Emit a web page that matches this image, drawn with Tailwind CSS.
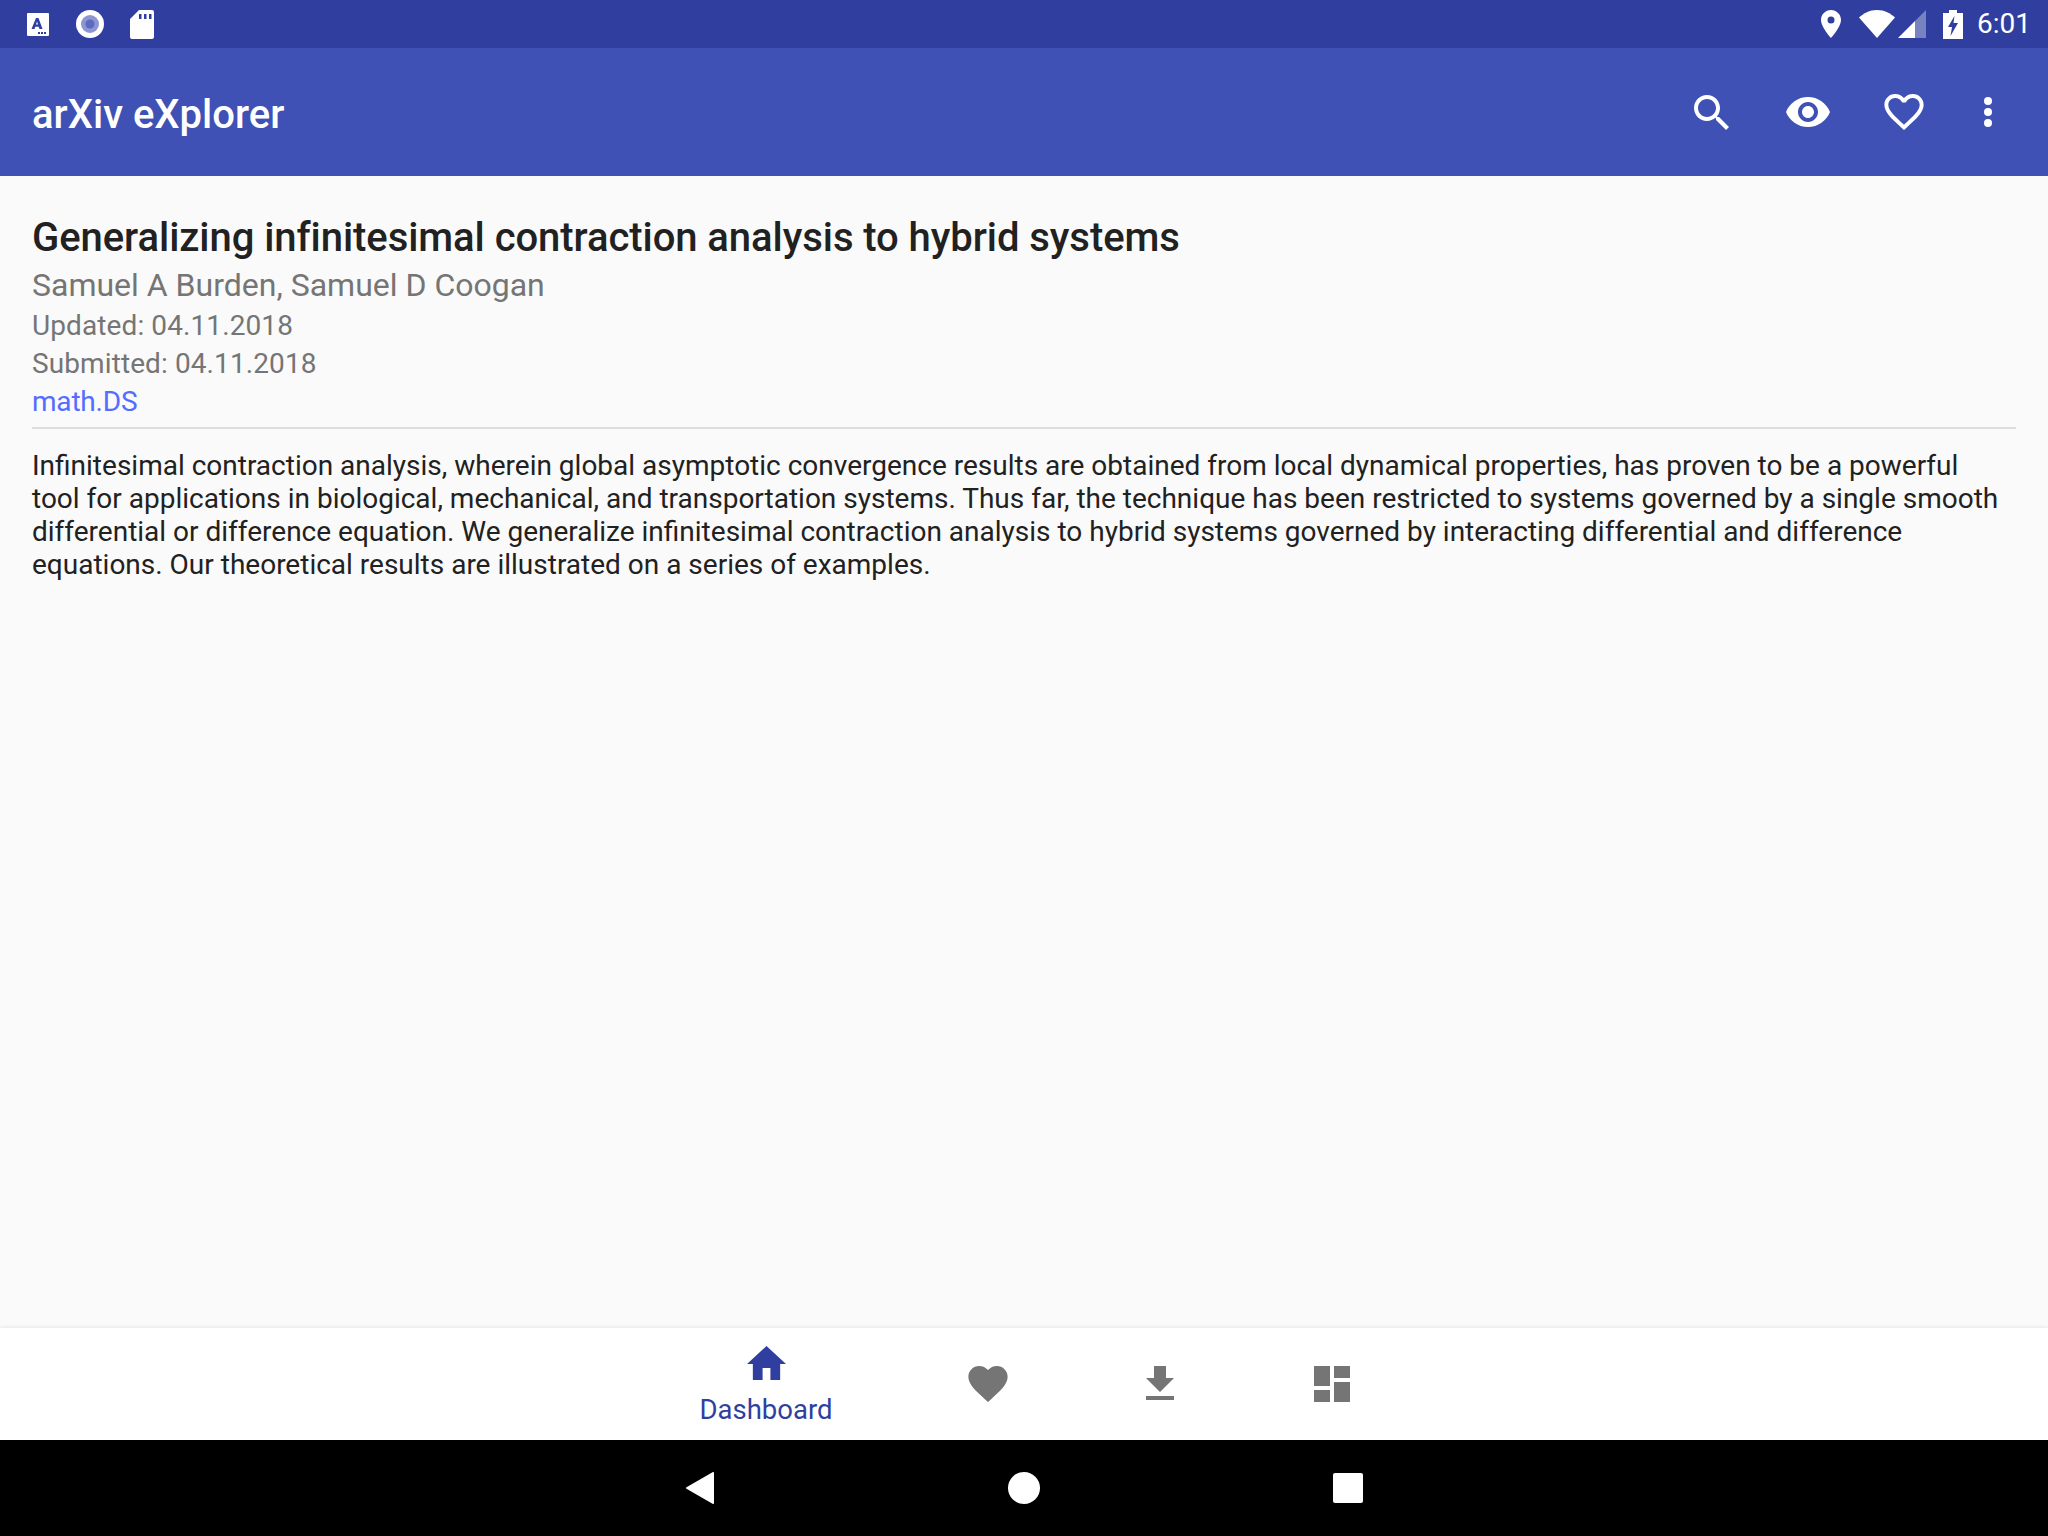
<!DOCTYPE html>
<html lang="en">

<head>
  <meta charset="UTF-8" />
  <title>arXiv eXplorer</title>
  <script src="https://cdn.jsdelivr.net/npm/@tailwindcss/browser@4"></script>
</head>

<body class="bg-[#fafafa] font-['Roboto',sans-serif]">
  <div class="w-[2048px] h-[1536px] flex flex-col overflow-hidden">
    <!-- Status bar -->
    <div class="h-[48px] bg-[#303f9f] flex items-center text-white">
      <svg class="ml-[27px] w-[22px] h-[23px]" viewBox="0 0 22 23">
        <path fill="#fff" fill-rule="evenodd" d="M1 0h20a1 1 0 0 1 1 1v21a1 1 0 0 1-1 1H1a1 1 0 0 1-1-1V1a1 1 0 0 1 1-1zM9 5l-4.500 11h3l.8-2.300h3.400l.8 2.300h3L11.500 5zM10 8.500l1 3h-2zM11 19h2v2h-2zM14 19h2v2h-2zM17 19h2v2h-2z" />
      </svg>
      <svg class="ml-[27px] w-[28px] h-[28px]" viewBox="0 0 28 28">
        <circle cx="14" cy="14" r="14" fill="#fff" />
        <circle cx="14" cy="14" r="9" fill="#8c96d0" />
        <circle cx="14" cy="14" r="4.500" fill="#5c6bc0" />
      </svg>
      <svg class="ml-[26px] w-[24px] h-[29px]" viewBox="0 0 24 29">
        <path fill="#fff" fill-rule="evenodd" d="M9 0h13a2 2 0 0 1 2 2v25a2 2 0 0 1-2 2H2a2 2 0 0 1-2-2V9zM9 4v5h2.500V4zM14 4v5h2.500V4zM19 4v5h2.500V4z" />
      </svg>
      <svg class="ml-auto w-[20px] h-[28px]" viewBox="0 0 20 28">
        <path fill="#fff" fill-rule="evenodd" d="M10 0C4.500 0 0 4.400 0 10c0 7 10 18 10 18s10-11 10-18C20 4.400 15.500 0 10 0zm0 6.500a3.500 3.500 0 1 1 0 7 3.500 3.500 0 0 1 0-7z" />
      </svg>
      <svg class="ml-[18px] w-[36px] h-[28px]" viewBox="0 0 36 28">
        <path fill="#fff" d="M18 28L0 7.500C4.500 3.500 10.500 0 18 0s13.500 3.500 18 7.500z" />
      </svg>
      <svg class="ml-[3px] w-[28px] h-[28px]" viewBox="0 0 28 28">
        <path fill="#fff" fill-opacity="0.35" d="M28 0v28H17V11z" />
        <path fill="#fff" d="M17 11v17H0z" />
      </svg>
      <svg class="ml-[17px] w-[20px] h-[29px]" viewBox="0 0 20 29">
        <path fill="#fff" fill-rule="evenodd" d="M6 0h8v3h6v26H0V3h6zM11.500 6L5 17h4l-1.500 9L15 13h-4.500z" />
      </svg>
      <span class="ml-[14px] mr-[17px] text-[28px] leading-none">6:01</span>
    </div>

    <!-- App bar -->
    <div class="h-[128px] bg-[#3f51b5] flex items-center text-white">
      <h1 class="ml-[32px] pt-[5px] text-[40px] font-medium leading-none">arXiv eXplorer</h1>
      <svg class="ml-auto w-[35px] h-[35px]" viewBox="3 3 17.490 17.490">
        <path fill="#fff" d="M15.500 14h-.79l-.28-.27C15.410 12.590 16 11.110 16 9.500 16 5.910 13.090 3 9.500 3S3 5.910 3 9.500 5.910 16 9.500 16c1.610 0 3.090-.59 4.230-1.570l.27.28v.79l5 4.990L20.490 19l-4.990-5zm-6 0C7.010 14 5 11.990 5 9.500S7.010 5 9.500 5 14 7.010 14 9.500 11.990 14 9.500 14z" />
      </svg>
      <svg class="ml-[57px] w-[44px] h-[30px]" viewBox="1 4.500 22 15">
        <path fill="#fff" d="M12 4.500C7 4.500 2.730 7.610 1 12c1.730 4.390 6 7.500 11 7.500s9.270-3.110 11-7.500c-1.730-4.390-6-7.500-11-7.500zM12 17c-2.760 0-5-2.240-5-5s2.240-5 5-5 5 2.240 5 5-2.240 5-5 5zm0-8c-1.660 0-3 1.340-3 3s1.340 3 3 3 3-1.340 3-3-1.340-3-3-3z" />
      </svg>
      <svg class="ml-[54px] w-[40px] h-[36px]" viewBox="2 3 20 18.350">
        <path fill="#fff" d="M16.500 3c-1.740 0-3.410.81-4.500 2.090C10.910 3.810 9.240 3 7.500 3 4.420 3 2 5.420 2 8.500c0 3.780 3.400 6.860 8.550 11.540L12 21.350l1.450-1.320C18.600 15.360 22 12.280 22 8.500 22 5.420 19.580 3 16.500 3zm-4.400 15.550l-.1.100-.1-.1C7.140 14.240 4 11.390 4 8.500 4 6.500 5.500 5 7.500 5c1.540 0 3.040.99 3.570 2.360h1.870C13.460 5.990 14.960 5 16.500 5c2 0 3.500 1.500 3.500 3.500 0 2.890-3.140 5.740-7.900 10.050z" />
      </svg>
      <svg class="ml-[58px] mr-[54px] w-[12px] h-[32px]" viewBox="0 0 12 32">
        <circle cx="6" cy="5" r="4" fill="#fff" />
        <circle cx="6" cy="16" r="4" fill="#fff" />
        <circle cx="6" cy="27" r="4" fill="#fff" />
      </svg>
    </div>

    <!-- Article -->
    <div class="flex-1 px-[32px] pt-[38px]">
      <h2 class="text-[40px] leading-[48px] tracking-[-0.06px] font-medium text-[#212121]">Generalizing infinitesimal contraction analysis to hybrid systems</h2>
      <p class="mt-[1px] text-[32px] leading-[44px] text-[#757575]">Samuel A Burden, Samuel D Coogan</p>
      <p class="text-[28px] leading-[38px] tracking-[0.1px] text-[#757575]">Updated: 04.11.2018</p>
      <p class="text-[28px] leading-[38px] tracking-[0.1px] text-[#757575]">Submitted: 04.11.2018</p>
      <p class="text-[28px] leading-[38px] tracking-[-0.2px] text-[#536dfe]">math.DS</p>
      <div class="h-[2px] bg-[#dedede] mt-[6px] mb-[20px]"></div>
      <p class="pr-[14px] text-[28px] leading-[33px] text-[#212121]">Infinitesimal contraction analysis, wherein global asymptotic convergence results are obtained from local dynamical properties, has proven to be a powerful tool for applications in biological, mechanical, and transportation systems. Thus far, the technique has been restricted to systems governed by a single smooth differential or difference equation. We generalize infinitesimal contraction analysis to hybrid systems governed by interacting differential and difference equations. Our theoretical results are illustrated on a series of examples.</p>
    </div>

    <!-- Bottom navigation -->
    <div class="h-[112px] bg-white shadow-[0_-1px_3px_rgba(0,0,0,0.08)] flex justify-center">
      <div class="w-[272px] flex flex-col items-center pt-[18px]">
        <svg class="w-[39px] h-[34px]" viewBox="2 3 20 17" preserveAspectRatio="none">
          <path fill="#303f9f" d="M10 20v-6h4v6h5v-8h3L12 3 2 12h3v8z" />
        </svg>
        <span class="mt-[13px] text-[27.5px] leading-[33px] text-[#303f9f]">Dashboard</span>
      </div>
      <div class="w-[172px] flex justify-center pt-[38px]">
        <svg class="w-[40px] h-[36px]" viewBox="2 3 20 18.350">
          <path fill="#757575" d="M12 21.350l-1.450-1.320C5.400 15.360 2 12.280 2 8.500 2 5.420 4.420 3 7.500 3c1.740 0 3.410.81 4.500 2.090C13.090 3.810 14.760 3 16.500 3 19.580 3 22 5.420 22 8.500c0 3.780-3.400 6.860-8.550 11.540z" />
        </svg>
      </div>
      <div class="w-[172px] flex justify-center pt-[38px]">
        <svg class="w-[28px] h-[34px]" viewBox="5 3 14 17">
          <path fill="#757575" d="M19 9h-4V3H9v6H5l7 7 7-7zM5 18v2h14v-2H5z" />
        </svg>
      </div>
      <div class="w-[172px] flex justify-center pt-[38px]">
        <svg class="w-[36px] h-[36px]" viewBox="0 0 36 36">
          <path fill="#757575" d="M0 0h16v20H0zM20 0h16v12H20zM20 16h16v20H20zM0 24h16v12H0z" />
        </svg>
      </div>
    </div>

    <!-- Navigation bar -->
    <div class="h-[96px] bg-black flex justify-center items-center">
      <div class="w-[324px] flex justify-center">
        <svg class="w-[28px] h-[32px]" viewBox="0 0 28 32">
          <path fill="#fff" stroke="#fff" stroke-width="2" stroke-linejoin="round" d="M27 1v30L1 16z" />
        </svg>
      </div>
      <div class="w-[324px] flex justify-center">
        <div class="w-[32px] h-[32px] rounded-full bg-white"></div>
      </div>
      <div class="w-[324px] flex justify-center">
        <div class="w-[30px] h-[30px] rounded-[2px] bg-white"></div>
      </div>
    </div>
  </div>
</body>

</html>
